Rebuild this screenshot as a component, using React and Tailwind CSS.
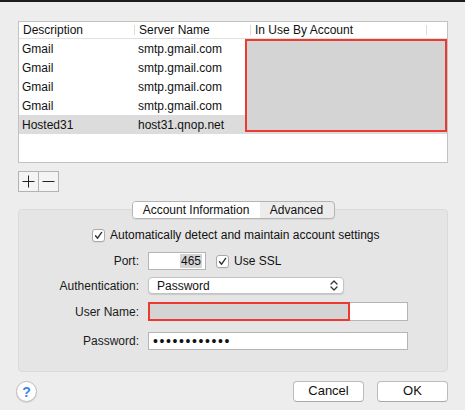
import React from 'react'

const font = { fontFamily: '"Liberation Sans", Arial, sans-serif' }

const rows = [
  { desc: 'Gmail', server: 'smtp.gmail.com' },
  { desc: 'Gmail', server: 'smtp.gmail.com' },
  { desc: 'Gmail', server: 'smtp.gmail.com' },
  { desc: 'Gmail', server: 'smtp.gmail.com' },
  { desc: 'Hosted31', server: 'host31.qnop.net', selected: true },
]

function Check() {
  return (
    <span className="flex h-[13px] w-[13px] items-center justify-center rounded-[3px] border border-[#a9a9a9] bg-white shadow-[0_1px_0_rgba(0,0,0,0.05)]">
      <svg width="9" height="9" viewBox="0 0 9 9">
        <path d="M1.5 4.8 L3.6 7.2 L7.6 1.4" fill="none" stroke="#333" strokeWidth="1.4" strokeLinecap="round" strokeLinejoin="round" />
      </svg>
    </span>
  )
}

function FieldRow({ label, children, className = '' }) {
  return (
    <div className={`flex items-center ${className}`}>
      <div className="w-[121px] pr-[1px] text-right text-[12px] text-[#1a1a1a]">{label}</div>
      <div className="ml-[8px] flex items-center">{children}</div>
    </div>
  )
}

export default function App() {
  return (
    <div className="h-[410px] w-[465px] overflow-hidden bg-[#ededed] text-[12px] text-[#111]" style={font}>
      <div className="h-[2px] bg-[#1c1c1c]" />

      {/* Server list */}
      <div className="relative ml-[18px] mt-[19px] h-[142px] w-[430px] border border-[#c2c2c2] bg-white">
        <div className="relative flex h-[17px] border-b border-[#e0e0e0]">
          <div className="w-[115px] pl-[4px] leading-[16px]">Description</div>
          <div className="w-[116px] pl-[5px] leading-[16px]">Server Name</div>
          <div className="flex-1 pl-[5px] leading-[16px]">In Use By Account</div>
          <span className="absolute left-[115px] top-[3px] h-[10px] w-px bg-[#dcdcdc]" />
          <span className="absolute left-[231px] top-[3px] h-[10px] w-px bg-[#dcdcdc]" />
          <span className="absolute left-[407px] top-[3px] h-[10px] w-px bg-[#dcdcdc]" />
        </div>
        {rows.map((r, i) => (
          <div key={i} className={`flex h-[19px] items-center ${r.selected ? 'bg-[#dcdcdc]' : ''}`}>
            <div className="w-[115px] pl-[3px]">{r.desc}</div>
            <div className="w-[116px] pl-[4px]">{r.server}</div>
          </div>
        ))}
        {/* redacted column */}
        <div className="absolute left-[226px] top-[17px] h-[93px] w-[202px] border-2 border-[#ec3a31] bg-[#d4d4d4]" />
      </div>

      {/* + / - */}
      <div className="ml-[18px] mt-[8px] flex h-[21px] w-[41px] border border-[#b3b3b3] bg-[#f4f4f4]">
        <div className="flex w-[20px] items-center justify-center border-r border-[#b3b3b3]">
          <svg width="13" height="13" viewBox="0 0 13 13">
            <path d="M6.5 0.5 V12.5 M0.5 6.5 H12.5" stroke="#222" strokeWidth="1" />
          </svg>
        </div>
        <div className="flex flex-1 items-center justify-center">
          <svg width="13" height="13" viewBox="0 0 13 13">
            <path d="M0.5 6.5 H12.5" stroke="#222" strokeWidth="1" />
          </svg>
        </div>
      </div>

      {/* Tabs */}
      <div className="relative z-10 mt-[9px] flex justify-center pl-[1px]">
        <div className="flex h-[18px] overflow-hidden rounded-[4px] border border-[#b4b4b4] bg-[#ececec] shadow-[0_1px_0_rgba(0,0,0,0.06)]">
          <div className="flex w-[127px] items-center justify-center bg-white leading-none">Account Information</div>
          <div className="flex w-[74px] items-center justify-center leading-none">Advanced</div>
        </div>
      </div>

      {/* Group box */}
      <div className="relative ml-[18px] -mt-[10px] h-[163px] w-[430px] rounded-[4px] border border-[#dadada] bg-[#e5e5e5] pt-[18px]">
        <div className="ml-[73px] flex h-[14px] items-center gap-[5px] text-[12px]">
          <Check />
          <span>Automatically detect and maintain account settings</span>
        </div>

        <FieldRow label="Port:" className="mt-[10px] h-[18px]">
          <div className="flex h-[18px] w-[58px] items-center justify-end border border-[#b5b5b5] bg-white pr-[3px]">
            <span className="bg-[#d5d5d5] px-[1px] leading-[14px]">465</span>
          </div>
          <div className="ml-[10px] flex items-center gap-[5px]">
            <Check />
            <span>Use SSL</span>
          </div>
        </FieldRow>

        <FieldRow label="Authentication:" className="mt-[7px] h-[17px]">
          <div className="flex h-[17px] w-[196px] items-center justify-between rounded-[4px] border border-[#c3c3c3] bg-white pl-[8px] pr-[5px] shadow-[0_1px_1px_rgba(0,0,0,0.12)]">
            <span className="leading-none">Password</span>
            <svg width="8" height="11" viewBox="0 0 8 11">
              <path d="M1 4 L4 1 L7 4 M1 7 L4 10 L7 7" fill="none" stroke="#333" strokeWidth="1.3" strokeLinecap="round" strokeLinejoin="round" />
            </svg>
          </div>
        </FieldRow>

        <FieldRow label="User Name:" className="mt-[8px] h-[19px]">
          <div className="relative h-[19px] w-[260px] border border-[#b5b5b5] bg-white">
            <div className="absolute -left-px -top-px h-[19px] w-[202px] border-2 border-[#ec3a31] bg-[#d4d4d4]" />
          </div>
        </FieldRow>

        <FieldRow label="Password:" className="mt-[11px] h-[18px]">
          <div className="flex h-[18px] w-[260px] items-center border border-[#b5b5b5] bg-white pl-[4px]">
            <span className="text-[14px] leading-none tracking-[1.6px]">••••••••••••</span>
          </div>
        </FieldRow>
      </div>

      {/* Bottom buttons */}
      <div className="mt-[8px] flex items-center pl-[16px] pr-[17px]">
        <div className="mt-[1px] flex h-[21px] w-[21px] items-center justify-center rounded-full border border-[#bdbdbd] bg-white shadow-[0_1px_1px_rgba(0,0,0,0.1)]">
          <span className="text-[14px] font-bold leading-none text-[#3c82f0]">?</span>
        </div>
        <div className="ml-auto flex gap-[13px]">
          <div className="flex h-[21px] w-[71px] items-center justify-center rounded-[4px] border border-[#bcbcbc] border-b-[#a8a8a8] bg-white text-[13px]">Cancel</div>
          <div className="flex h-[21px] w-[71px] items-center justify-center rounded-[4px] border border-[#bcbcbc] border-b-[#a8a8a8] bg-white text-[13px]">OK</div>
        </div>
      </div>
    </div>
  )
}
